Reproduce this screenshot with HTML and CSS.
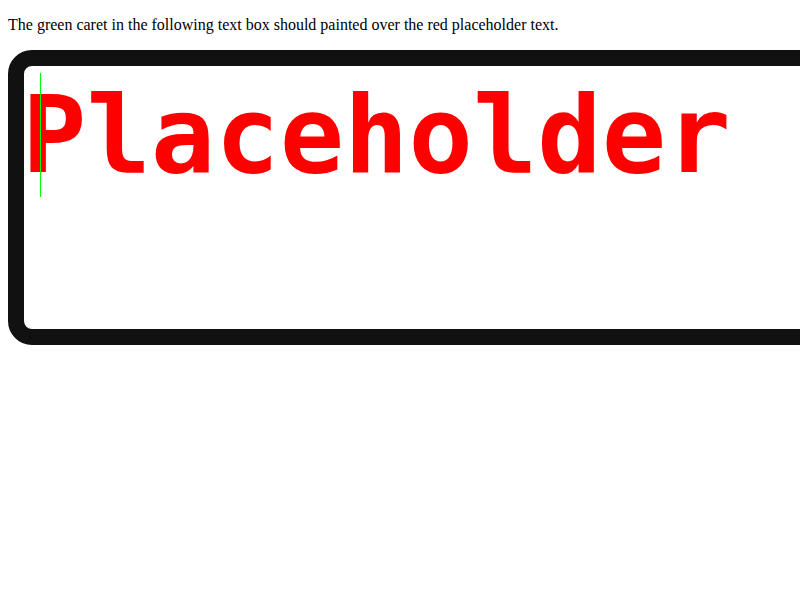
FILE: index.html
```html
<!DOCTYPE html>
<html>
<head>
<meta charset="utf-8">
<link rel="stylesheet" href="styles.css">
</head>
<body>
<p class="note">The green caret in the following text box should painted over the red placeholder text.</p>
<div class="stage">
  <div class="box">
    <div class="field">
      <span class="placeholder">Placeholder</span>
      <span class="caret"></span>
    </div>
  </div>
</div>
</body>
</html>
```

FILE: styles.css
```css
html {
  margin: 0;
  padding: 0;
  background: #fff;
  overflow: hidden;
}
body {
  margin: 0;
  padding: 0 8px;
  font-family: "Liberation Serif", "Times New Roman", serif;
  font-size: 16px;
}
.note {
  margin: 16px 0;
  line-height: 18px;
  color: #000;
}
.stage {
  margin-right: -8px;
  overflow: hidden;
}
.box {
  width: 1000px;
  height: 249px;
  border: 16px solid #111;
  border-radius: 24px;
  box-sizing: content-box;
  padding: 7px 16px;
  background: #fff;
}
.field {
  position: relative;
  font-family: "DejaVu Sans Mono", monospace;
  font-weight: bold;
  font-size: 107px;
  line-height: 124px;
  white-space: nowrap;
}
.placeholder {
  color: #f00;
  margin-left: -18px;
}
.caret {
  position: absolute;
  left: 0;
  top: 0;
  width: 1px;
  height: 124px;
  background: #0f0;
}
```
